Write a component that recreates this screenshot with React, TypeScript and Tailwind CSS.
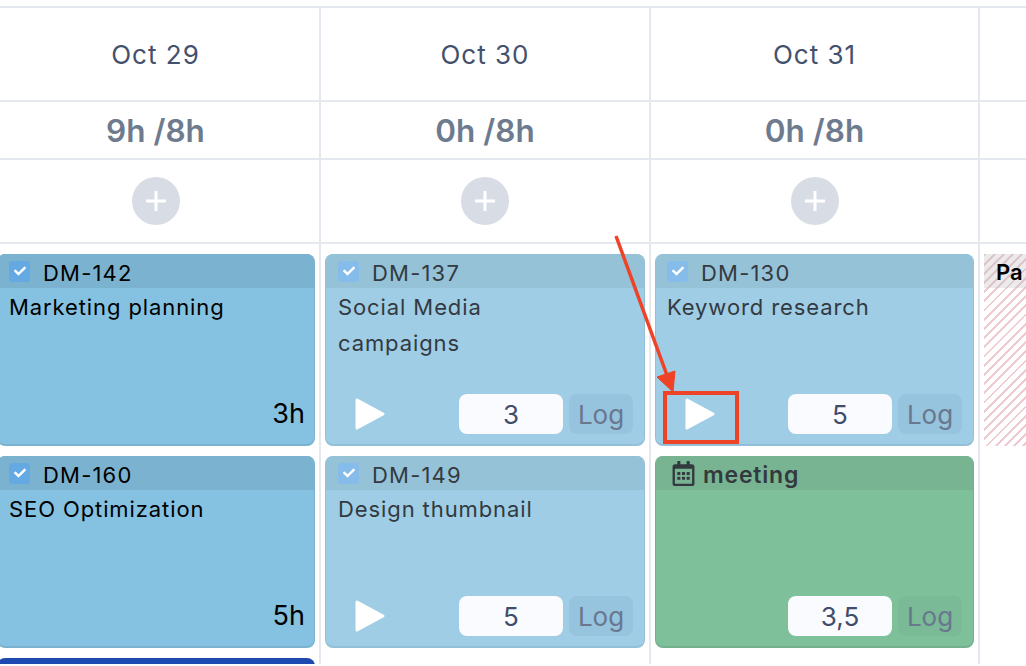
import React from "react";
import { FaCheck, FaRegCalendarAlt } from "react-icons/fa";

type CardT = {
  id?: string; title?: string[]; hours?: string; log?: string; play?: boolean; meeting?: boolean; faded?: boolean; blue?: boolean; nudge?: boolean;
};

function Play() {
  return (
    <svg width="32" height="34" viewBox="0 0 32 34" className="block">
      <path d="M3 3 L29 17 L3 31 Z" fill="#fff" stroke="#fff" strokeWidth="3" strokeLinejoin="round" />
    </svg>
  );
}

function Check({ faded }: { faded?: boolean }) {
  return (
    <span className={`flex w-[21px] h-[21px] rounded-[3px] items-center justify-center text-white ${faded ? "bg-[#85bce9]" : "bg-[#65a9e3]"}`}>
      <FaCheck size={12} />
    </span>
  );
}

function Card({ c }: { c: CardT }) {
  if (c.blue) return <div className="h-[60px] rounded-t-lg bg-[#1e4ab0] shrink-0" />;
  const bg = c.meeting ? "bg-[#7dc09a] border-[#74b08e]" : c.faded ? "bg-[#9fcde5] border-[#93c0d8]" : "bg-[#85c1e0] border-[#7ab2cf]";
  const head = c.meeting ? "bg-[#78b492]" : c.faded ? "bg-[#96c2d8]" : "bg-[#7ab2cf]";
  const text = c.faded || c.meeting ? "text-[#333a3f]" : "text-black";
  return (
    <div className={`h-[192px] shrink-0 rounded-lg overflow-hidden flex flex-col border-b-2 border-x ${bg} ${text}`}>
      <div className={`h-[34px] shrink-0 flex items-center ${head} ${c.meeting ? "pl-[15px] gap-[7px]" : c.nudge ? "pl-[12px] gap-[13px]" : "pl-[11px] gap-[13px]"}`}>
        {c.meeting ? <FaRegCalendarAlt size={25} className="text-[#333a3f]" /> : <Check faded={c.faded} />}
        {c.meeting ? (
          <span className="text-[23px] leading-[34px] pt-[3px] font-semibold tracking-[0.8px]">meeting</span>
        ) : (
          <span className="text-[22px] leading-[34px] pt-[3px] tracking-[1.2px]">{c.id}</span>
        )}
      </div>
      <div className="flex-1 relative">
        <div className={`pr-[12px] pt-[1px] text-[22px] leading-[36px] tracking-[0.9px] ${c.nudge ? "pl-[12px]" : "pl-[11px]"}`}>
          {c.title?.map((t) => <div key={t}>{t}</div>)}
        </div>
        {c.hours && (
          <div className="absolute right-[9px] bottom-[13px] text-[27px] leading-[34px]">{c.hours}</div>
        )}
        {c.log && (
          <div className="absolute left-0 right-0 bottom-[10px] flex items-center h-[40px] pl-[28px] pr-[11px]">
            <div className="w-[32px]">{c.play && <Play />}</div>
            <div className="ml-auto w-[104px] h-[40px] rounded-lg bg-[#fafbfe] flex items-center justify-center text-[26px] text-[#3f4d6b]">{c.log}</div>
            <div className={`ml-[6px] w-[64px] h-[40px] rounded-lg flex items-center justify-center text-[26px] text-[#69778f] ${c.meeting ? "bg-[#7aba96]" : "bg-[#96c4de]"}`}>Log</div>
          </div>
        )}
      </div>
    </div>
  );
}

function Column({ date, hours, cards, w, pad }: { date?: string; hours?: string; cards: CardT[]; w: string; pad: string }) {
  return (
    <div className={`${w} shrink-0 border-r-2 border-[#e6e8ef] flex flex-col`}>
      <div className="h-[92px] shrink-0 flex items-center justify-center text-[26px] tracking-[1px] text-[#44516d]">{date}</div>
      <div className="h-[58px] shrink-0 pt-[1px] border-t-2 border-[#e6e8ef] flex items-center justify-center text-[31.5px] font-semibold text-[#6e7a8e]">{hours}</div>
      <div className="h-[84px] shrink-0 border-t-2 border-[#e6e8ef] flex items-center justify-center">
        {date && (
          <div className="w-[48px] h-[48px] rounded-full bg-[#d7dce5] flex items-center justify-center">
            <svg width="22" height="22" viewBox="0 0 22 22"><path d="M11 1v20M1 11h20" stroke="#fff" strokeWidth="3" /></svg>
          </div>
        )}
      </div>
      <div className={`border-t-2 border-[#e6e8ef] pt-[10px] flex flex-col gap-[10px] ${pad}`}>
        {cards.map((c, i) => <Card key={i} c={c} />)}
      </div>
    </div>
  );
}

export default function App() {
  return (
    <div className="relative w-[1026px] h-[666px] overflow-hidden bg-white font-['Inter','Liberation_Sans',sans-serif]">
      <div className="pt-[6px]">
        <div className="border-t-2 border-[#e6e8ef] flex -ml-[8px] h-[658px] overflow-hidden">
          <Column w="w-[329px]" pad="pl-[5px] pr-[4px]" date="Oct 29" hours="9h /8h" cards={[
            { id: "DM-142", title: ["Marketing planning"], hours: "3h" },
            { id: "DM-160", title: ["SEO Optimization"], hours: "5h" },
            { blue: true },
          ]} />
          <Column w="w-[330px]" pad="pl-[4px] pr-[4px]" date="Oct 30" hours="0h /8h" cards={[
            { id: "DM-137", title: ["Social Media", "campaigns"], log: "3", play: true, faded: true, nudge: true },
            { id: "DM-149", title: ["Design thumbnail"], log: "5", play: true, faded: true, nudge: true },
          ]} />
          <Column w="w-[329px]" pad="pl-[4px] pr-[4px]" date="Oct 31" hours="0h /8h" cards={[
            { id: "DM-130", title: ["Keyword research"], log: "5", play: true, faded: true },
            { meeting: true, title: [""], log: "3,5" },
          ]} />
          <div className="w-[60px] shrink-0 flex flex-col">
            <div className="h-[92px] shrink-0" />
            <div className="h-[58px] shrink-0 border-t-2 border-[#e6e8ef]" />
            <div className="h-[84px] shrink-0 border-t-2 border-[#e6e8ef]" />
            <div className="border-t-2 border-[#e6e8ef] pt-[10px] pl-[4px]">
              <div className="h-[192px] bg-[repeating-linear-gradient(135deg,#eccbd3_0,#eccbd3_2px,#ffffff_2px,#ffffff_6.5px)]">
                <div className="h-[34px] bg-[#bdbdbd]/30 pl-[12px] pt-[3px] flex items-center text-[22px] font-semibold text-black">Pa</div>
              </div>
            </div>
          </div>
        </div>
      </div>
      <svg className="absolute left-0 top-0 pointer-events-none" width="1026" height="666" viewBox="0 0 1026 666">
        <path d="M616 236 L668 378" stroke="#ee4327" strokeWidth="3.5" fill="none" />
        <path d="M673 392 L657 377 L675 371 Z" fill="#ee4327" stroke="#ee4327" strokeWidth="1" />
        <rect x="665" y="393" width="72" height="49" fill="none" stroke="#ee4327" strokeWidth="4" />
      </svg>
    </div>
  );
}
